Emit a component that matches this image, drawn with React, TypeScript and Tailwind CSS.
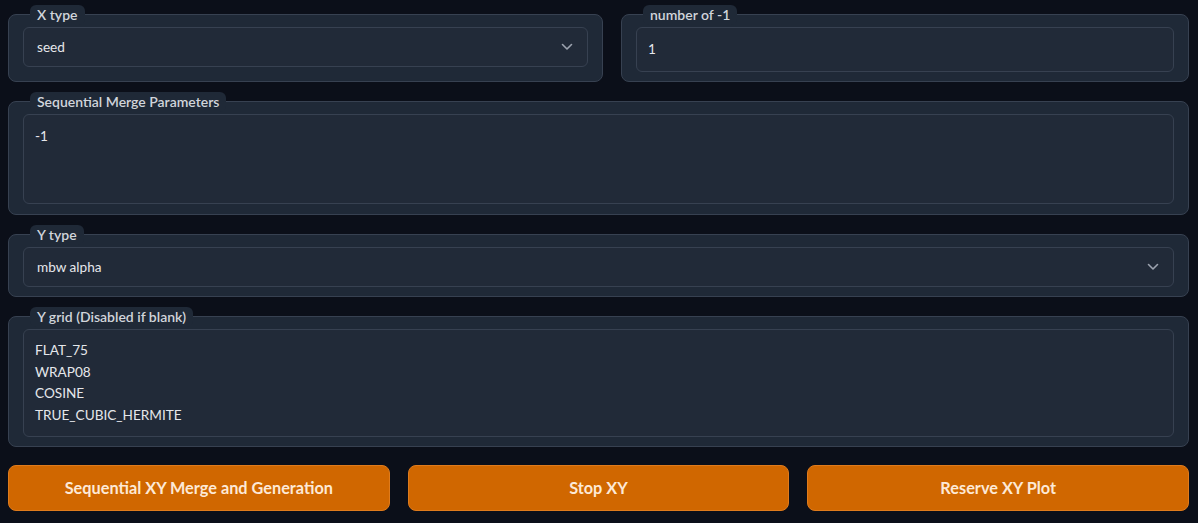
import React from "react";

function Chevron() {
  return (
    <svg width="12" height="8" viewBox="0 0 12 8" fill="none" className="shrink-0">
      <path d="M1.5 1.5 L6 6 L10.5 1.5" stroke="#9ca3af" strokeWidth="1.6" strokeLinecap="round" strokeLinejoin="round" />
    </svg>
  );
}

function Block({ label, children, className = "" }: { label: string; children: React.ReactNode; className?: string }) {
  return (
    <div className={`relative rounded-lg border border-[#374151] bg-[#1f2937] pt-3 pb-[11px] px-[14px] ${className}`}>
      <div className="absolute left-[21px] -top-[10px] rounded-md bg-[#1f2937] px-[7px] h-[20px] flex items-center text-[14px] font-semibold text-[#d1d5db] leading-none">
        {label}
      </div>
      {children}
    </div>
  );
}

export default function App() {
  const font = { fontFamily: "Lato, 'Noto Sans', sans-serif" };
  return (
    <div style={font} className="w-full h-[523px] bg-[#0b0f19] pl-2 pr-[9px] pt-[14px] flex flex-col gap-[19px]">
      <div className="flex gap-[18px] h-[68px]">
        <Block label="X type" className="w-[595px]">
          <div className="h-[40px] rounded-md border border-[#374151] bg-[#212a38] flex items-center justify-between pl-[13px] pr-[14px] text-[13.6px] text-[#e5e7eb]">
            <span>seed</span>
            <Chevron />
          </div>
        </Block>
        <Block label="number of -1" className="flex-1">
          <div className="h-[45px] rounded-md border border-[#374151] bg-[#212a38] flex items-center pl-[11px] text-[13.6px] text-[#e5e7eb]">
            1
          </div>
        </Block>
      </div>

      <Block label="Sequential Merge Parameters" className="h-[114px]">
        <div className="h-[90px] rounded-md border border-[#374151] bg-[#212a38] pl-[11px] pt-[11px] text-[13.6px] leading-[21px] text-[#e5e7eb]">
          -1
        </div>
      </Block>

      <Block label="Y type" className="h-[63px]">
        <div className="h-[40px] rounded-md border border-[#374151] bg-[#212a38] flex items-center justify-between pl-[13px] pr-[14px] text-[13.6px] text-[#e5e7eb]">
          <span>mbw alpha</span>
          <Chevron />
        </div>
      </Block>

      <Block label="Y grid (Disabled if blank)" className="h-[131px]">
        <div className="h-[108px] rounded-md border border-[#374151] bg-[#212a38] pl-[11px] pt-[10px] text-[13.6px] leading-[21.5px] text-[#e5e7eb]">
          <div>FLAT_75</div>
          <div>WRAP08</div>
          <div>COSINE</div>
          <div>TRUE_CUBIC_HERMITE</div>
        </div>
      </Block>

      <div className="flex gap-[18px] -mt-px">
        {["Sequential XY Merge and Generation", "Stop XY", "Reserve XY Plot"].map((t) => (
          <button
            key={t}
            className="flex-1 h-[46px] rounded-lg bg-[#d06700] border border-[#df7b1c] text-[16.3px] font-bold text-[#fde9d6]"
          >
            {t}
          </button>
        ))}
      </div>
    </div>
  );
}
